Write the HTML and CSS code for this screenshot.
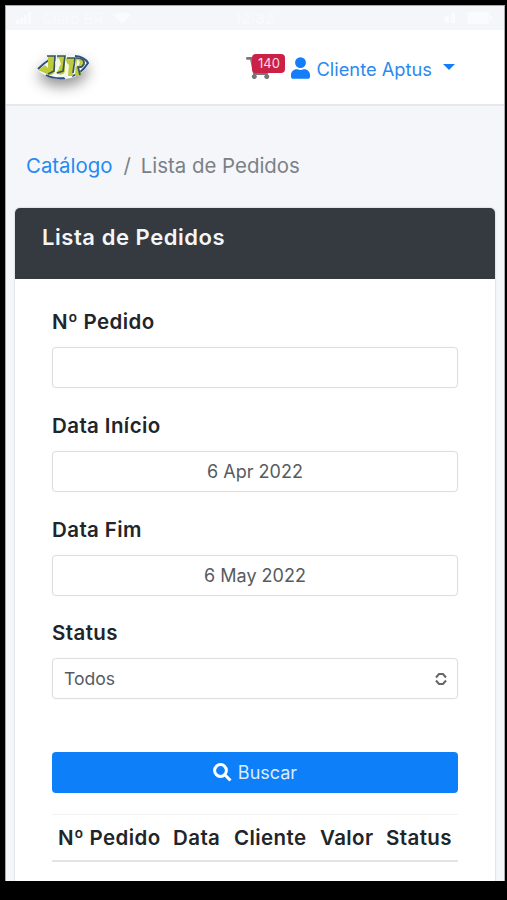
FILE: index.html
```html
<!DOCTYPE html>
<html lang="pt-BR">
<head>
<meta charset="utf-8">
<title>Lista de Pedidos</title>
<link rel="stylesheet" href="styles.css">
</head>
<body>
<div class="screen">
  <div class="statusbar">
    <div class="carrier"><svg width="16" height="12" viewBox="0 0 16 12"><path d="M0 8h3v4H0zM4 6h3v6H4zM8 3h3v9H8zM12 0h3v12h-3z"/></svg><span class="net">Claro BR</span><svg width="18" height="12" viewBox="0 0 18 12"><path d="M0 3Q9-3 18 3L9 12Z"/></svg></div>
    <span class="clock">12:32</span>
    <div class="power"><svg width="14" height="12" viewBox="0 0 14 12"><path d="M2 4h4v7H2zM8 1h4v10H8z"/></svg><svg width="26" height="12" viewBox="0 0 26 12"><rect width="22" height="12" rx="3"/><rect x="23" y="4" width="2" height="4"/></svg></div>
  </div>
  <header class="navbar">
    <svg class="logo" width="58" height="36" viewBox="0 0 58 36">
      <path class="logo-base" d="M2 19Q13 7 28 5Q47 4 54 13Q46 29 27 29Q11 29 2 19Z"/>
      <path class="logo-ring" d="M3 19Q9 13 14 10M40 6Q50 7 53 13Q46 24 37 26M30 28Q18 29 11 25"/>
      <path class="logo-letters" d="M13 6h7v15q-2 6-8 3l-9-4 7-5 3 3zM22 6h8v16q-3 5-9 1l3-4zM31 8h9v4h-2v14h-5zM41 7q8 0 8 6-2 6-5 5l3 8h-7z"/>
      <path class="logo-lines" d="M12 6h8l-1 15-6 3M22 6h8l-2 15-6 2M32 8h8l-2 15M41 8q9 0 8 6-2 4-6 3l2 8"/>
      <path class="logo-shine" d="M20 12l4-4 2 6-4 7zM31 12l3 3-1 11-4 2zM42 10q4 0 2 5l-3 2z"/>
    </svg>
    <div class="account">
      <a class="cart">
        <svg width="25" height="22" viewBox="0 0 576 512"><path d="M528 301l47-208c3-15-8-29-23-29H159l-9-45C148 8 138 0 126 0H24C11 0 0 11 0 24v16c0 13 11 24 24 24h70l70 343a56 56 0 1 0 67 9h210a56 56 0 1 0 64-10l5-25c4-15-8-29-23-29H218l-6-32h293c11 0 21-8 23-19z"/></svg>
        <span class="badge">140</span>
      </a>
      <svg class="user" width="19" height="22" viewBox="0 0 448 512"><path d="M224 256a128 128 0 1 0 0-256 128 128 0 0 0 0 256zm90 32h-17a174 174 0 0 1-146 0h-17C60 288 0 348 0 422v42c0 27 22 48 48 48h352c27 0 48-21 48-48v-42c0-74-60-134-134-134z"/></svg>
      <span class="name">Cliente Aptus</span>
      <i class="caret"></i>
    </div>
  </header>
  <main>
    <nav class="breadcrumb"><a class="crumb-link">Catálogo</a><span class="slash">/</span><span class="crumb">Lista de Pedidos</span></nav>
    <section class="card">
      <div class="card-header"><h1 class="title">Lista de Pedidos</h1></div>
      <form class="card-body">
        <div class="group"><label>Nº Pedido</label><div class="control"></div></div>
        <div class="group"><label>Data Início</label><div class="control date">6 Apr 2022</div></div>
        <div class="group"><label>Data Fim</label><div class="control date">6 May 2022</div></div>
        <div class="group"><label>Status</label><div class="control select"><span class="todos">Todos</span><svg width="12" height="14" viewBox="0 0 12 14"><path d="M1 5.500L4 2h4l3 3.500M1 8.500L4 12h4l3-3.500"/></svg></div></div>
        <button type="button" class="search"><svg width="19" height="19" viewBox="0 0 19 19"><circle cx="7.500" cy="7.500" r="5.900"/><path d="M12 12l5.500 5.500"/></svg><span>Buscar</span></button>
        <table>
          <thead><tr><th class="c1">Nº Pedido</th><th class="c2">Data</th><th class="c3">Cliente</th><th class="c4">Valor</th><th>Status</th></tr></thead>
        </table>
      </form>
    </section>
  </main>
</div>
</body>
</html>
```
FILE: styles.css
```css
* { box-sizing: border-box; }
body { margin: 0; height: 900px; padding: 5px 2px 19px 5px; background: #000; overflow: hidden; font-family: Inter, "Liberation Sans", sans-serif; font-size: 20px; color: #212529; }
.screen { height: 876px; background: #f4f6f9; overflow: hidden; border: solid #aaa; border-width: 1px 1px 0 1px; }
.statusbar { height: 24px; display: flex; justify-content: space-between; align-items: center; padding: 0 11px 0 10px; color: #f9fafc; fill: #fafbfd; font-size: 15px; }
.carrier, .power { display: flex; align-items: center; gap: 10px; width: 150px; }
.power { justify-content: flex-end; }
.clock { font-weight: 600; }
.navbar { height: 76px; background: #fff; border-bottom: 2px solid #e6e9eb; display: flex; justify-content: space-between; align-items: flex-start; padding: 20px 49px 0 29px; }
.logo { overflow: visible; filter: drop-shadow(0 7px 7px rgba(0,0,0,.42)); }
.logo-base { fill: #f5f8fb; }
.logo-ring { fill: none; stroke: #2c4f80; stroke-width: 2; }
.logo-letters { fill: #c0cb3c; }
.logo-lines { fill: none; stroke: #365564; stroke-width: 1.7; }
.logo-shine { fill: #f4f6e6; }
.account { display: flex; align-items: center; height: 38px; color: #2b89ef; }
.cart { position: relative; width: 45px; height: 22px; margin-top: -2px; }
.cart svg { fill: #777; display: block; }
.badge { position: absolute; left: 6px; top: -3px; width: 33px; height: 19px; border-radius: 4px; background: #cc2147; color: #f9dce3; font-size: 13px; line-height: 19px; text-align: center; }
.user { fill: #147dfa; margin-top: -2px; }
.name { margin-left: 6px; font-size: 18.3px; white-space: nowrap; }
.caret { margin-left: 11px; margin-top: -5px; border: 6px solid transparent; border-top-color: #147dfa; border-bottom: 0; }
.breadcrumb { height: 102px; display: flex; align-items: center; padding: 17px 0 0 20px; font-size: 20.4px; color: #7b8085; }
.crumb-link { color: #2589f5; }
.slash { margin: 0 10px 0 11px; }
.card { width: 480px; margin-left: 9px; height: 700px; background: #fff; border-radius: 5px 5px 0 0; box-shadow: 0 0 2px rgba(0,0,0,.25); }
.card-header { height: 71px; background: #343a40; border-radius: 5px 5px 0 0; padding: 15px 27px; }
.title { margin: 0; font-size: 22px; letter-spacing: .55px; line-height: 28px; font-weight: 600; color: #f4f5f6; }
.card-body { padding: 26px 37px 0; }
.group { height: 103.8px; }
label { display: block; height: 42px; line-height: 34px; font-size: 20.5px; letter-spacing: .4px; font-weight: 600; }
.control { height: 41px; border: 1.5px solid #dcdfe1; border-radius: 4px; box-shadow: 0 0 1px #dcdfe1; display: flex; align-items: center; font-size: 18px; color: #565b61; }
.date { justify-content: center; }
.select { justify-content: space-between; padding: 0 10px 0 11px; }
.todos { font-size: 17.6px; }
.select svg { fill: none; stroke: #666; stroke-width: 2; }
.search { display: flex; width: 100%; height: 41px; margin: 32px 0 21px; border: 0; border-radius: 4px; background: #0d7ff9; color: #dcecff; font: 18px Inter, sans-serif; align-items: center; justify-content: center; gap: 6px; }
.search svg { fill: none; stroke: #fff; stroke-width: 3; }
table { width: 100%; table-layout: fixed; border-collapse: collapse; border-top: 1px solid #f0f2f4; border-bottom: 2px solid #e0e4e7; }
th { height: 46px; padding: 0 0 0 6px; text-align: left; font-size: 20.5px; letter-spacing: .4px; font-weight: 600; white-space: nowrap; }
.c1 { width: 115px; }
.c2 { width: 61px; }
.c3 { width: 86px; }
.c4 { width: 66px; }
```
